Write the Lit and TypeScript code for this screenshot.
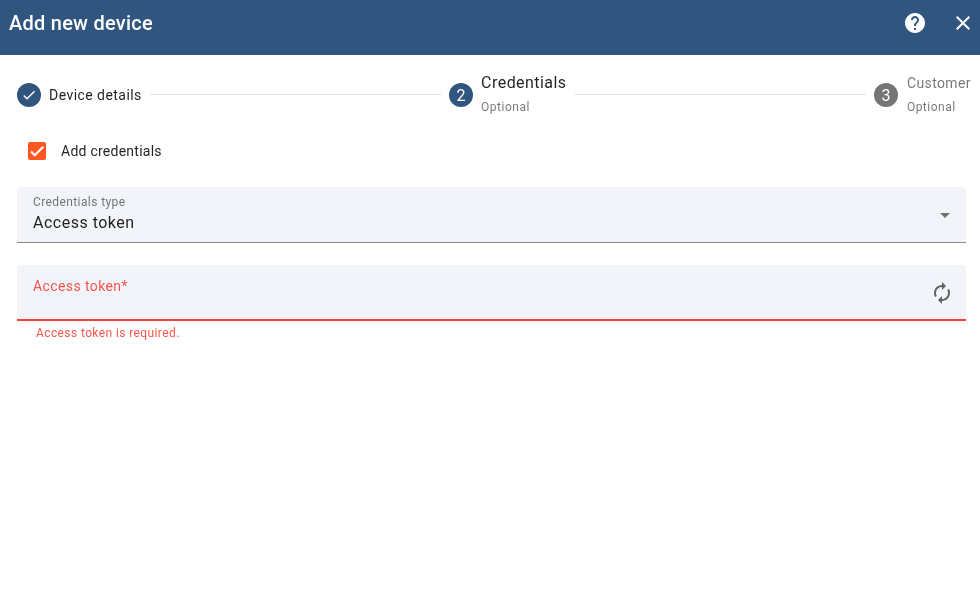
import { LitElement, html, css, svg } from "lit";
import { customElement } from "lit/decorators.js";

const icon = (d: string, cls: string) =>
  html`<svg class=${cls} viewBox="0 0 24 24" aria-hidden="true">${svg`<path d=${d}></path>`}</svg>`;

const HELP = "M12 2C6.48 2 2 6.48 2 12s4.48 10 10 10 10-4.48 10-10S17.52 2 12 2zm1 17h-2v-2h2v2zm2.07-7.75l-.9.92C13.45 12.9 13 13.5 13 15h-2v-.5c0-1.1.45-2.1 1.17-2.83l1.24-1.26c.37-.36.59-.86.59-1.41 0-1.1-.9-2-2-2s-2 .9-2 2H8c0-2.21 1.79-4 4-4s4 1.79 4 4c0 .88-.36 1.68-.93 2.25z";
const CLOSE = "M19 6.41L17.59 5 12 10.59 6.41 5 5 6.41 10.59 12 5 17.59 6.41 19 12 13.41 17.59 19 19 17.59 13.41 12z";
const DONE = "M9 16.17L4.83 12l-1.42 1.41L9 19 21 7l-1.41-1.41z";
const RENEW = "M12 6v3l4-4-4-4v3c-4.42 0-8 3.58-8 8 0 1.57.46 3.03 1.24 4.26L6.7 14.8c-.45-.83-.7-1.79-.7-2.8 0-3.31 2.69-6 6-6zm6.76 1.74L17.3 9.2c.44.84.7 1.79.7 2.8 0 3.31-2.69 6-6 6v-3l-4 4 4 4v-3c4.42 0 8-3.58 8-8 0-1.57-.46-3.03-1.24-4.26z";

@customElement("app-root")
export class AppRoot extends LitElement {
  static styles = css`
    :host {
      display: block;
      width: 980px;
      height: 603px;
      overflow: hidden;
      will-change: transform;
      font-family: Roboto, "Liberation Sans", sans-serif;
      color: rgba(0, 0, 0, 0.87);
    }
    .toolbar {
      height: 55px;
      box-sizing: border-box;
      background: #305680;
      color: #fff;
      display: flex;
      align-items: center;
      padding: 0 5px 9px 9px;
    }
    .title {
      font-size: 20px;
      font-weight: 500;
      letter-spacing: 0.25px;
      flex: 1;
    }
    .tool {
      fill: #fff;
      width: 24px;
      height: 24px;
      display: block;
    }
    .tools {
      display: flex;
      gap: 24px;
    }
    .stepper {
      display: flex;
      align-items: center;
      height: 80px;
      padding: 0 9px 0 17px;
    }
    .step {
      display: flex;
      align-items: center;
      gap: 8px;
    }
    .circle {
      width: 24px;
      height: 24px;
      border-radius: 50%;
      background: #305680;
      color: #fff;
      display: flex;
      align-items: center;
      justify-content: center;
      font-size: 16px;
      flex: none;
    }
    .circle.grey {
      background: #757575;
    }
    .circle svg {
      width: 16px;
      height: 16px;
      fill: #fff;
    }
    .lbl {
      font-size: 14px;
      letter-spacing: 0.45px;
    }
    .stack {
      display: flex;
      flex-direction: column;
      height: 44px;
      margin-top: -4px;
      justify-content: space-between;
    }
    .big {
      font-size: 16px;
      line-height: 24px;
      letter-spacing: 0.45px;
    }
    .small {
      font-size: 14px;
      letter-spacing: 0.4px;
      margin-left: 1px;
      color: rgba(0, 0, 0, 0.54);
    }
    .sub {
      font-size: 12px;
      line-height: 16px;
      letter-spacing: 0.5px;
      color: rgba(0, 0, 0, 0.54);
    }
    .s3 {
      margin-left: 1px;
    }
    .line {
      flex: 1;
      height: 1px;
      background: #e0e0e0;
      margin: 0 8px 2px;
    }
    .check-row {
      display: flex;
      align-items: center;
      height: 18px;
      margin: 7px 0 0 28px;
      gap: 15px;
      font-size: 14px;
      letter-spacing: 0.25px;
    }
    .box {
      width: 18px;
      height: 18px;
      border-radius: 2px;
      background: #ff5722;
      display: flex;
      align-items: center;
      justify-content: center;
    }
    .box svg {
      width: 18px;
      height: 18px;
      stroke: #fff;
      stroke-width: 2.8;
      fill: none;
    }
    .field {
      margin: 0 14px 0 17px;
      height: 56px;
      box-sizing: border-box;
      background: #f3f4f9;
      border-radius: 4px 4px 0 0;
      border-bottom: 1px solid #8a8a8a;
      padding: 7px 16px 0;
      display: flex;
      align-items: flex-start;
    }
    .first {
      margin-top: 27px;
    }
    .second {
      margin-top: 22px;
      border-bottom: 2px solid #f44336;
    }
    .fbody {
      flex: 1;
    }
    .flabel {
      font-size: 12px;
      line-height: 16px;
      letter-spacing: 0.4px;
      color: rgba(0, 0, 0, 0.54);
    }
    .fvalue {
      font-size: 16px;
      line-height: 24px;
      margin-top: 1px;
      letter-spacing: 0.5px;
    }
    .arrow {
      width: 0;
      height: 0;
      border-left: 5px solid transparent;
      border-right: 5px solid transparent;
      border-top: 5px solid rgba(0, 0, 0, 0.54);
      margin: 19px 0 0;
    }
    .red {
      color: #f6564c;
      font-size: 14px;
      line-height: 16px;
      letter-spacing: 0.4px;
      margin-top: 6px;
    }
    .renew {
      width: 24px;
      height: 24px;
      fill: rgba(0, 0, 0, 0.6);
      margin: 9px -4px 0 0;
    }
    .error {
      color: #f6564c;
      font-size: 12px;
      line-height: 16px;
      letter-spacing: 0.4px;
      margin: 4px 0 0 36px;
    }
  `;

  render() {
    return html`
      <div class="toolbar">
        <div class="title">Add new device</div>
        <div class="tools">
          ${icon(HELP, "tool")} ${icon(CLOSE, "tool")}
        </div>
      </div>
      <div class="stepper">
        <div class="step">
          <div class="circle">${icon(DONE, "")}</div>
          <div class="lbl">Device details</div>
        </div>
        <div class="line"></div>
        <div class="step">
          <div class="circle">2</div>
          <div class="stack">
            <div class="big">Credentials</div>
            <div class="sub">Optional</div>
          </div>
        </div>
        <div class="line"></div>
        <div class="step">
          <div class="circle grey">3</div>
          <div class="stack">
            <div class="big small">Customer</div>
            <div class="sub s3">Optional</div>
          </div>
        </div>
      </div>
      <div class="check-row">
        <div class="box">
          <svg viewBox="0 0 24 24" aria-hidden="true"><path d="M4.1 12.7 9 17.6 20.3 6.3"></path></svg>
        </div>
        <div>Add credentials</div>
      </div>
      <div class="field first">
        <div class="fbody">
          <div class="flabel">Credentials type</div>
          <div class="fvalue">Access token</div>
        </div>
        <div class="arrow"></div>
      </div>
      <div class="field second">
        <div class="fbody"><div class="red">Access token*</div></div>
        ${icon(RENEW, "renew")}
      </div>
      <div class="error">Access token is required.</div>
    `;
  }
}
